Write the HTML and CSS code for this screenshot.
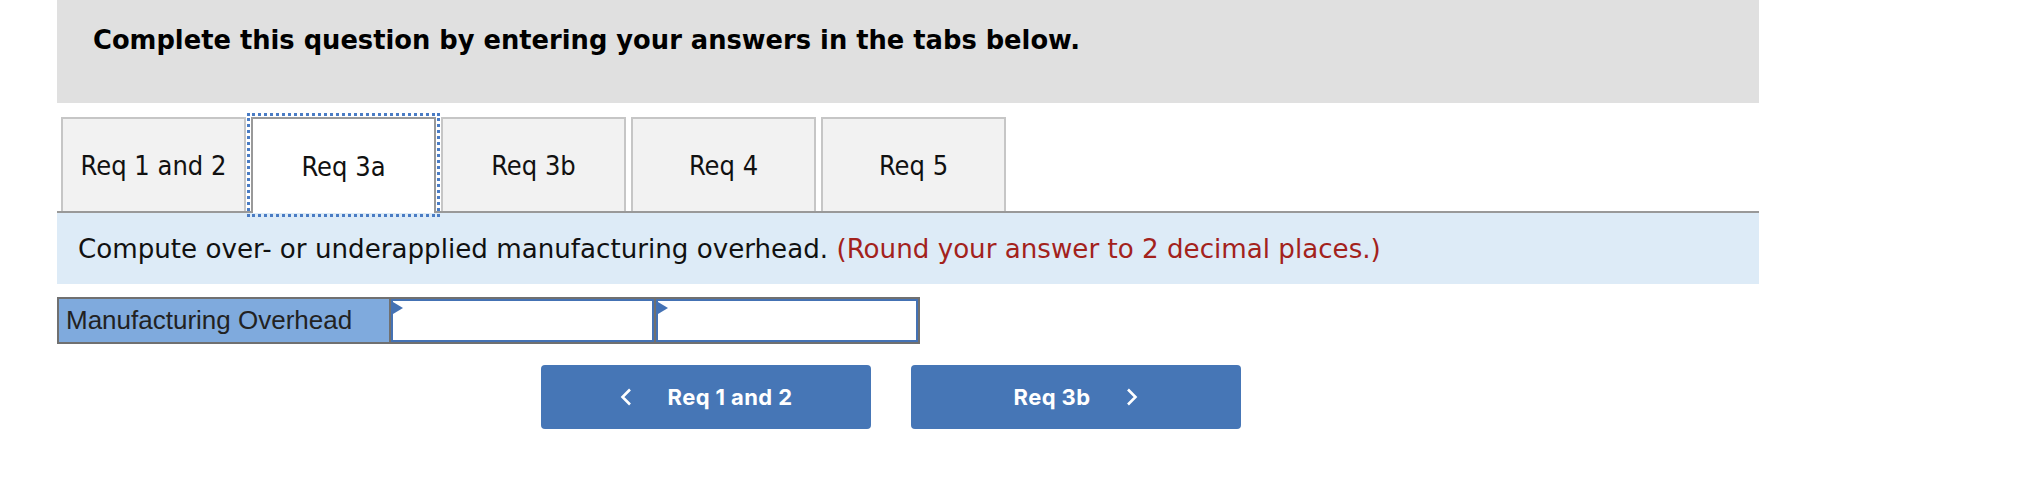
FILE: index.html
```html
<!DOCTYPE html>
<html lang="en">

<head>
    <meta charset="UTF-8">
    <meta name="viewport" content="width=device-width, initial-scale=1.0">
    <title>Req 3a</title>
    <link rel="stylesheet" href="styles.css">
</head>

<body>
    <section class="q-box">
        <div class="q-header">
            <h3>Complete this question by entering your answers in the tabs below.</h3>
        </div>

        <div class="q-tabs">
            <div class="q-tab">Req 1 and 2</div>
            <div class="q-tab active">Req 3a</div>
            <div class="q-tab">Req 3b</div>
            <div class="q-tab">Req 4</div>
            <div class="q-tab">Req 5</div>
        </div>

        <div class="q-hint">
            <span>Compute over- or underapplied manufacturing overhead. <span class="q-red">(Round your answer to 2 decimal places.)</span></span>
        </div>

        <div class="q-row">
            <div class="q-label">Manufacturing Overhead</div>
            <div class="q-input"><span class="flag"></span></div>
            <div class="q-input"><span class="flag"></span></div>
        </div>

        <div class="q-nav">
            <button class="q-btn">
                <svg width="12" height="18" viewBox="0 0 12 18"><polyline points="10,1.5 2.5,9 10,16.5" fill="none" stroke="#fff" stroke-width="2.6"/></svg>
                <span>Req 1 and 2</span>
            </button>
            <button class="q-btn">
                <span>Req 3b</span>
                <svg width="12" height="18" viewBox="0 0 12 18"><polyline points="2,1.5 9.5,9 2,16.5" fill="none" stroke="#fff" stroke-width="2.6"/></svg>
            </button>
        </div>
    </section>
</body>

</html>
```

FILE: styles.css
```css
* {
    margin: 0;
    padding: 0;
    box-sizing: border-box;
}

body {
    background: #fff;
    font-family: "DejaVu Sans", sans-serif;
    color: #111;
}

.q-box {
    margin-left: 57px;
    width: 1702px;
}

.q-box>.q-header {
    background: #e0e0e0;
    height: 103px;
    padding: 24px 36px 0;
}

.q-header>h3 {
    font-size: 25.75px;
    font-weight: bold;
    line-height: 32px;
    color: #000;
}

.q-box>.q-tabs {
    display: flex;
    margin-top: 14px;
    padding-left: 4px;
    border-bottom: 2px solid #999;
}

.q-tabs>.q-tab {
    width: 185px;
    height: 94px;
    margin-right: 5px;
    background: #f2f2f2;
    border: 2px solid #c6c6c6;
    border-bottom: none;
    display: flex;
    align-items: center;
    justify-content: center;
    font-family: "DejaVu Sans Condensed", "DejaVu Sans", sans-serif;
    font-stretch: condensed;
    font-size: 27px;
}

.q-tabs>.q-tab.active {
    background: #fff;
    border-color: #999;
    height: 96px;
    margin-bottom: -2px;
    outline: 3px dotted #4a7cc4;
    outline-offset: 1px;
}

.q-box>.q-hint {
    background: #ddebf7;
    height: 71px;
    padding-left: 21px;
    display: flex;
    align-items: center;
    font-size: 26.15px;
}

.q-hint .q-red {
    color: #a3221c;
}

.q-box>.q-row {
    display: flex;
    width: 863px;
    height: 47px;
    margin-top: 13px;
    border: 2px solid #707070;
    background: #707070;
    gap: 2px;
}

.q-row>.q-label {
    width: 330px;
    background: #7faadd;
    font-family: "Liberation Sans", Arial, sans-serif;
    font-size: 26px;
    color: #222;
    padding-left: 7px;
    display: flex;
    align-items: center;
}

.q-row>.q-input {
    position: relative;
    flex: 1;
    background: #fff;
    border: 2px solid #4472b4;
}

.q-input>.flag {
    position: absolute;
    left: 0;
    top: 1px;
    width: 0;
    height: 0;
    border-top: 6px solid transparent;
    border-bottom: 6px solid transparent;
    border-left: 10px solid #4472b4;
}

.q-box>.q-nav {
    display: flex;
    gap: 40px;
    margin-top: 21px;
    padding-left: 484px;
}

.q-nav>.q-btn {
    width: 330px;
    height: 64px;
    border: none;
    border-radius: 4px;
    background: #4676b6;
    color: #fff;
    font-family: Inter, "Liberation Sans", sans-serif;
    font-weight: bold;
    font-size: 22px;
    letter-spacing: 0.4px;
    display: flex;
    align-items: center;
    justify-content: center;
    gap: 36px;
}
```
